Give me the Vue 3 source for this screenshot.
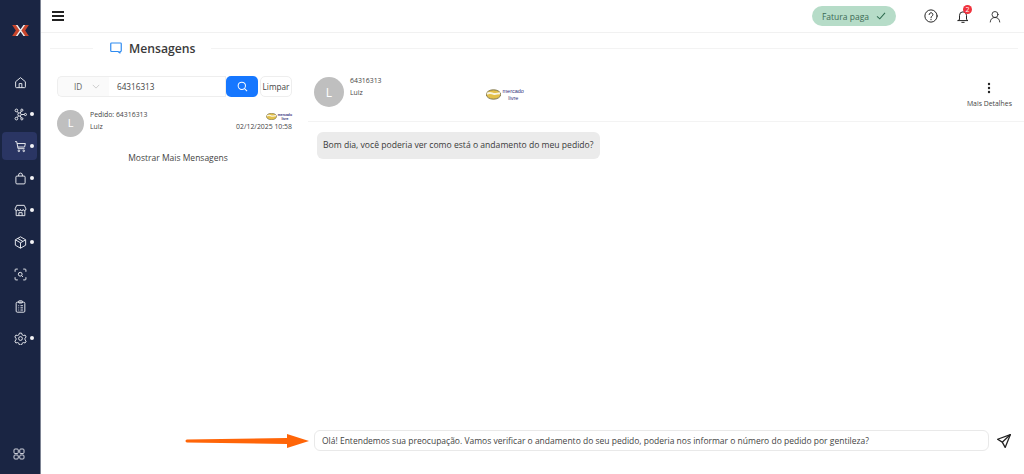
<template>
  <div class="app">
    <aside class="side">
      <div class="logo">
        <svg width="17" height="13" viewBox="0 0 18 14">
          <path d="M0 1h4.500l4 6-4 6H0l4-6z" fill="#c8452c" />
          <path d="M18 1h-4.500l-4 6 4 6H18l-4-6z" fill="#c8452c" />
          <path d="M4 1h1.800L9 5.600 12.200 1H14L9.900 7 14 13h-1.800L9 8.400 5.800 13H4l4.100-6z" fill="#f2f2f2" />
        </svg>
      </div>
      <nav class="nav">
        <div v-for="item in navItems" :key="item.id" :class="['nav-item', item.active ? 'active' : '']">
          <svg width="13" height="13" viewBox="0 0 24 24" class="nav-icon" v-html="item.svg"></svg>
          <span v-if="item.dot" class="dot"></span>
        </div>
      </nav>
      <div class="side-bottom">
        <svg width="12" height="12" viewBox="0 0 24 24" class="nav-icon">
          <rect x="2" y="2" width="8.500" height="9" rx="2" />
          <rect x="13.500" y="2" width="8.500" height="9" rx="2" />
          <rect x="2" y="14" width="8.500" height="8" rx="2" />
          <rect x="13.500" y="14" width="8.500" height="8" rx="2" />
        </svg>
      </div>
    </aside>

    <main class="main">
      <header class="top">
        <div class="burger"><span></span><span></span><span></span></div>
        <div class="top-right">
          <div class="paid">
            Fatura paga
            <svg width="10" height="8" viewBox="0 0 12 10"><path d="M1 5.500l3.500 3L11 1" fill="none" stroke="#2f6b50" stroke-width="1.300" /></svg>
          </div>
          <svg class="top-icon help" width="14" height="14" viewBox="0 0 24 24">
            <circle cx="12" cy="12" r="10.500" />
            <path d="M8.800 9.500a3.200 3.200 0 1 1 4.800 2.800c-1 .6-1.600 1.200-1.600 2.400" />
            <path d="M12 17.500v1" />
          </svg>
          <div class="bell">
            <svg class="top-icon" width="14" height="15" viewBox="0 0 24 24">
              <path d="M6 17V10a6 6 0 0 1 12 0v7l2.500 2h-17z" />
              <path d="M10 22h4" />
            </svg>
            <span class="badge">2</span>
          </div>
          <svg class="top-icon user" width="12" height="13" viewBox="0 0 24 24">
            <circle cx="12" cy="8" r="6" />
            <path d="M2.500 23c.5-6 4-9 9.500-9s9 3 9.500 9" />
          </svg>
        </div>
      </header>

      <div class="title-row">
        <span class="rule short"></span>
        <div class="title">
          <svg width="12" height="12" viewBox="0 0 24 24"><path d="M3 2h18a1.500 1.500 0 0 1 1.500 1.500v14A1.500 1.500 0 0 1 21 19h-1v3l-4-3H3a1.500 1.500 0 0 1-1.500-1.500v-14A1.500 1.500 0 0 1 3 2z" fill="none" stroke="#2f8bf0" stroke-width="2.400" stroke-linejoin="round" /></svg>
          <span>Mensagens</span>
        </div>
        <span class="rule"></span>
      </div>

      <section class="content">
        <div class="list">
          <div class="search">
            <div class="select">
              <span>ID</span>
              <svg width="8" height="5" viewBox="0 0 10 6"><path d="M1 1l4 4 4-4" fill="none" stroke="#c4c4c4" stroke-width="1" /></svg>
            </div>
            <div class="field">64316313</div>
            <button class="go">
              <svg width="11" height="11" viewBox="0 0 24 24"><circle cx="10.500" cy="10.500" r="8" fill="none" stroke="#fff" stroke-width="2.200" /><path d="M16.500 16.500L22 22" stroke="#fff" stroke-width="2.200" /></svg>
            </button>
            <button class="clear">Limpar</button>
          </div>

          <div class="chat-row">
            <div class="avatar small">L</div>
            <div class="chat-text">
              <div>Pedido: 64316313</div>
              <div>Luiz</div>
            </div>
            <div class="chat-meta">
              <div class="ml small-ml">
                <svg width="11" height="7" viewBox="0 0 24 16"><ellipse cx="12" cy="8" rx="11.500" ry="7.500" fill="#e3c04a" stroke="#77704e" stroke-width="1.500" /><path d="M1.500 7c4-3 6.500-1 10.500 0s6.500-1 10.500-1" fill="none" stroke="#f8f4e0" stroke-width="3" /></svg>
                <span class="ml-text">mercado<br />livre</span>
              </div>
              <div class="date">02/12/2025 10:58</div>
            </div>
          </div>

          <div class="more">Mostrar Mais Mensagens</div>
        </div>

        <div class="thread">
          <div class="thread-head">
            <div class="avatar big">L</div>
            <div class="thread-name">
              <div>64316313</div>
              <div>Luiz</div>
            </div>
            <div class="ml big-ml">
              <svg width="15" height="11" viewBox="0 0 24 16"><ellipse cx="12" cy="8" rx="11.500" ry="7.500" fill="#e3c04a" stroke="#77704e" stroke-width="1.500" /><path d="M1.500 7c4-3 6.500-1 10.500 0s6.500-1 10.500-1" fill="none" stroke="#f8f4e0" stroke-width="3" /></svg>
              <span class="ml-text">mercado<br />livre</span>
            </div>
            <div class="details">
              <svg width="4" height="12" viewBox="0 0 4 12"><circle cx="2" cy="2" r="1.200" /><circle cx="2" cy="6" r="1.200" /><circle cx="2" cy="10" r="1.200" /></svg>
              <span>Mais Detalhes</span>
            </div>
          </div>

          <div class="messages">
            <div class="bubble">Bom dia, você poderia ver como está o andamento do meu pedido?</div>
          </div>

          <div class="composer">
            <div class="reply">Olá! Entendemos sua preocupação. Vamos verificar o andamento do seu pedido, poderia nos informar o número do pedido por gentileza?</div>
            <svg class="send" width="14" height="14" viewBox="0 0 24 24">
              <path d="M23 1L1 9l8 5 5 9z" />
              <path d="M23 1L9 14" />
            </svg>
          </div>
        </div>
      </section>

      <svg class="arrow" width="126" height="20" viewBox="0 0 126 20">
        <path d="M2 10L102 8.500v3z" fill="#ff6508" stroke="#ff6508" stroke-width="3" stroke-linejoin="round" />
        <path d="M102 3l22 7-22 7z" fill="#ff6508" />
      </svg>
    </main>
  </div>
</template>

<script setup>
const navItems = [
  { id: "home", svg: '<path d="M3 10.500L12 3l9 7.500V20a1.500 1.500 0 0 1-1.500 1.500h-15A1.500 1.500 0 0 1 3 20z"/><path d="M9.500 21.500V14h5v7.500"/>' },
  { id: "hub", dot: true, svg: '<circle cx="10" cy="12" r="3"/><circle cx="4.500" cy="4.500" r="2.500"/><circle cx="4.500" cy="19.500" r="2.500"/><circle cx="14.500" cy="4" r="2"/><circle cx="14.500" cy="20" r="2"/><circle cx="21" cy="12" r="2"/><path d="M6 6.500l2.500 3M6 17.500l2.500-3M13 12h6M11.500 9.500l2-4M11.500 14.500l2 4"/>' },
  { id: "cart", dot: true, active: true, svg: '<path d="M2 3h3l2.500 13h12"/><path d="M5.500 6.500H21l-1.500 6.500H7"/><circle cx="9" cy="20" r="1.500"/><circle cx="18" cy="20" r="1.500"/>' },
  { id: "bag", dot: true, svg: '<rect x="3.500" y="7.500" width="17" height="14.500" rx="2"/><path d="M8.500 7.500V5.500a3.500 3.500 0 0 1 7 0v2"/>' },
  { id: "store", dot: true, svg: '<path d="M5 2.500h14l3 6.500a2.500 2.500 0 0 1-5 1 2.500 2.500 0 0 1-5 0 2.500 2.500 0 0 1-5 0 2.500 2.500 0 0 1-5-1z"/><path d="M4 12v9.500h16V12"/><path d="M9 21.500V16h6v5.500"/>' },
  { id: "box", dot: true, svg: '<path d="M12 1.500l9.500 5.500v10L12 22.500 2.500 17V7z"/><path d="M2.500 7L12 12.500 21.500 7M12 12.500v10M7 4.500l9.500 5.500"/>' },
  { id: "scan", svg: '<path d="M2 7V3.500A1.500 1.500 0 0 1 3.500 2H7M17 2h3.500A1.500 1.500 0 0 1 22 3.500V7M22 17v3.500a1.500 1.500 0 0 1-1.500 1.500H17M7 22H3.500A1.500 1.500 0 0 1 2 20.500V17"/><circle cx="11.500" cy="11.500" r="3.500"/><path d="M14 14l2.500 2.500"/>' },
  { id: "clipboard", svg: '<rect x="4" y="4" width="16" height="18.500" rx="2"/><rect x="8.500" y="1.500" width="7" height="4" rx="1"/><path d="M8 10.500h1.500M12 10.500h4.500M8 14.500h1.500M12 14.500h4.500M8 18.500h1.500M12 18.500h4.500"/>' },
  { id: "gear", dot: true, svg: '<circle cx="12" cy="12" r="3.500"/><path d="M10 2h4l.8 3 2.700 1.500 3-.8 2 3.500-2.200 2.200v3.200l2.200 2.200-2 3.500-3-.8-2.700 1.500-.8 3h-4l-.8-3-2.700-1.500-3 .8-2-3.500 2.200-2.200v-3.200L1.500 9.200l2-3.500 3 .8L9.200 5z"/>' }
];
</script>

<style>
html, body {
  margin: 0;
  background: #fff;
}
</style>

<style scoped>
.app {
  display: flex;
  width: 1024px;
  height: 474px;
  overflow: hidden;
  background: #fff;
  color: #333;
  font-family: "Open Sans", "Noto Sans", sans-serif;
}

/* sidebar */
.side {
  display: flex;
  flex-direction: column;
  width: 41px;
  flex: none;
  background: #1a2543;
  border-right: 1px solid #7d8494;
  box-sizing: border-box;
}
.logo {
  display: flex;
  justify-content: center;
  padding-top: 24px;
  height: 50px;
  box-sizing: border-box;
}
.nav {
  display: flex;
  flex-direction: column;
  gap: 4px;
  padding: 18px 3px 0 2px;
}
.nav-item {
  position: relative;
  display: flex;
  align-items: center;
  height: 28px;
  padding-left: 12px;
  border-radius: 4px;
}
.nav-item.active {
  background: #2a3563;
}
.nav-icon {
  fill: none;
  stroke: #e6e8ee;
  stroke-width: 1.800;
  stroke-linejoin: round;
}
.dot {
  position: absolute;
  left: 28px;
  top: 12px;
  width: 4px;
  height: 4px;
  border-radius: 50%;
  background: #f4f4f6;
}
.side-bottom {
  display: flex;
  margin-top: auto;
  padding: 0 0 14px 13px;
}

/* top */
.main {
  position: relative;
  flex: 1;
  display: flex;
  flex-direction: column;
  min-width: 0;
}
.top {
  display: flex;
  align-items: center;
  justify-content: space-between;
  height: 33px;
  flex: none;
  box-sizing: border-box;
  padding: 0 23px 0 11px;
  border-bottom: 1px solid #f1f1f1;
}
.burger {
  display: flex;
  flex-direction: column;
  gap: 2.500px;
  width: 12px;
}
.burger span {
  height: 1.500px;
  background: #222;
}
.top-right {
  display: flex;
  align-items: center;
}
.paid {
  display: flex;
  align-items: center;
  gap: 7px;
  height: 20px;
  padding: 0 10px;
  border-radius: 10px;
  background: #b6dcc8;
  color: #3c6a55;
  font-size: 8.500px;
}
.top-icon {
  fill: none;
  stroke: #222;
  stroke-width: 1.700;
  stroke-linecap: round;
  stroke-linejoin: round;
}
.help {
  margin-left: 28px;
}
.bell {
  position: relative;
  display: flex;
  margin-left: 18px;
}
.badge {
  position: absolute;
  top: -4px;
  left: 7px;
  width: 9px;
  height: 9px;
  border-radius: 50%;
  background: #f0323c;
  color: #fff;
  font-size: 7px;
  line-height: 9px;
  text-align: center;
}
.user {
  margin-left: 19px;
}

/* title */
.title-row {
  display: flex;
  align-items: center;
  height: 30px;
  flex: none;
  padding: 0 6px 0 9px;
}
.rule {
  flex: 1;
  height: 1px;
  background: #f3f3f3;
}
.rule.short {
  flex: none;
  width: 43px;
}
.title {
  display: flex;
  align-items: center;
  gap: 7px;
  padding: 0 16px 0 17px;
  color: #3a3a3a;
  font-size: 12.200px;
  font-weight: 600;
}

/* list */
.content {
  flex: 1;
  display: flex;
  min-height: 0;
}
.list {
  width: 267px;
  flex: none;
  box-sizing: border-box;
  padding: 13px 15px 0 16px;
}
.search {
  display: flex;
  align-items: stretch;
  width: 235px;
  height: 21px;
  font-size: 8.200px;
}
.select {
  display: flex;
  align-items: center;
  gap: 10px;
  width: 52px;
  box-sizing: border-box;
  padding-left: 16px;
  border: 1px solid #eee;
  border-right: 0;
  border-radius: 5px 0 0 5px;
  background: #fafafa;
  color: #666;
}
.field {
  display: flex;
  align-items: center;
  width: 117px;
  box-sizing: border-box;
  padding-left: 8px;
  border: 1px solid #eee;
  border-left: 0;
  color: #444;
}
.go {
  display: flex;
  align-items: center;
  justify-content: center;
  width: 32px;
  padding: 0;
  border: 0;
  border-radius: 5px;
  background: #1677ff;
}
.clear {
  width: 32px;
  margin-left: 2px;
  padding: 0;
  border: 1px solid #eee;
  border-radius: 5px;
  background: #fff;
  color: #444;
  font: inherit;
}
.avatar {
  display: flex;
  align-items: center;
  justify-content: center;
  flex: none;
  border-radius: 50%;
  background: #bfbfbf;
  color: #fff;
}
.avatar.small {
  width: 27px;
  height: 27px;
  font-size: 11px;
}
.avatar.big {
  width: 30px;
  height: 30px;
  font-size: 12px;
}
.chat-row {
  display: flex;
  align-items: center;
  width: 235px;
  margin-top: 12px;
  font-size: 6.900px;
  line-height: 11.500px;
}
.chat-text {
  margin: 0 0 5px 6px;
  color: #444;
}
.chat-meta {
  margin: 0 0 1px auto;
  text-align: right;
  color: #444;
}
.ml {
  display: flex;
  align-items: center;
  color: #34317a;
  font-family: "Liberation Sans", sans-serif;
}
.ml-text {
  line-height: 1.2;
  text-align: center;
}
.small-ml {
  justify-content: flex-end;
  gap: 1px;
  font-size: 3.400px;
  font-weight: 700;
}
.date {
  margin-top: 0;
}
.more {
  width: 235px;
  box-sizing: border-box;
  margin-top: 15px;
  padding-left: 7px;
  text-align: center;
  font-size: 8.500px;
  color: #444;
}

/* thread */
.thread {
  flex: 1;
  display: flex;
  flex-direction: column;
  min-width: 0;
}
.thread-head {
  display: flex;
  align-items: center;
  height: 59px;
  flex: none;
  box-sizing: border-box;
  padding: 0 12px 0 6px;
  border-bottom: 1px solid #f3f3f3;
}
.thread-name {
  margin-left: 6px;
  margin-bottom: 11px;
  font-size: 6.900px;
  line-height: 11.500px;
  color: #444;
}
.big-ml {
  gap: 2px;
  margin: 5px 0 0 104px;
  font-size: 5.500px;
}
.details {
  display: flex;
  flex-direction: column;
  align-items: center;
  gap: 5px;
  margin-left: auto;
  margin-top: 6px;
  font-size: 6.900px;
  color: #444;
}
.details svg {
  fill: #222;
}
.messages {
  flex: 1;
  padding: 10px 9px;
}
.bubble {
  width: fit-content;
  padding: 6px 6px;
  border-radius: 6px;
  background: #ebebeb;
  color: #3a3a3a;
  font-size: 8.600px;
  line-height: 15px;
}
.composer {
  display: flex;
  align-items: center;
  gap: 8px;
  flex: none;
  padding: 0 13px 23px 6px;
}
.reply {
  flex: 1;
  height: 21px;
  box-sizing: border-box;
  padding-left: 7px;
  border: 1px solid #e9e9e9;
  border-radius: 6px;
  color: #444;
  font-size: 8.500px;
  line-height: 19px;
  white-space: nowrap;
}
.send {
  flex: none;
  fill: none;
  stroke: #222;
  stroke-width: 2.200;
  stroke-linejoin: round;
}

/* annotation over the page */
.arrow {
  position: absolute;
  left: 144px;
  top: 431px;
}
</style>
